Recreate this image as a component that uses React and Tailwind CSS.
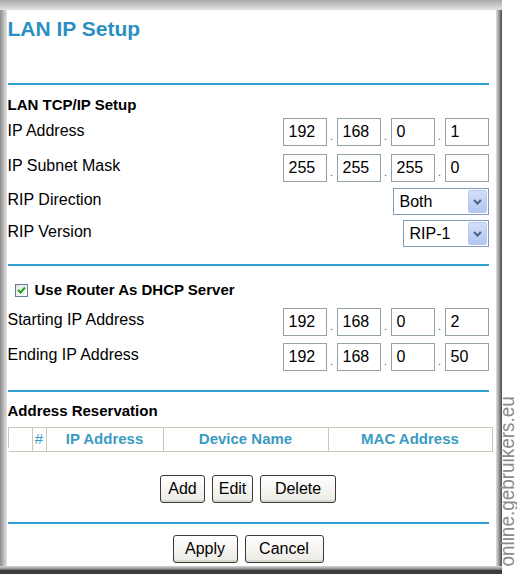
import React from 'react';

const Field = ({ value }) => (
  <div className="w-[44px] h-[28px] border border-[#93a2a8] bg-white flex items-center pl-[5px] text-[16px] leading-none">
    {value}
  </div>
);

const IpGroup = ({ values }) => (
  <div className="flex items-end">
    {values.map((v, i) => (
      <React.Fragment key={i}>
        {i > 0 && <span className="w-[10px] text-center text-[11px] leading-none pb-[4px] text-[#555]">.</span>}
        <Field value={v} />
      </React.Fragment>
    ))}
  </div>
);

const Chevron = () => (
  <svg width="9" height="6" viewBox="0 0 9 6">
    <polyline points="1,1 4.5,4.5 8,1" fill="none" stroke="#4d6185" strokeWidth="2" />
  </svg>
);

const Select = ({ value, w }) => (
  <div className={`${w} h-[27px] border border-[#7f9db9] bg-white flex items-center pl-[6px] p-px`}>
    <span className="flex-1 text-[16px] leading-none">{value}</span>
    <div className="w-[19px] h-full rounded-[2px] border border-[#b7c8ef] bg-gradient-to-b from-[#d3defb] to-[#b3c6f3] flex items-center justify-center">
      <Chevron />
    </div>
  </div>
);

const Btn = ({ children, w }) => (
  <div className={`${w} h-[28px] border border-[#3a3a3a] rounded-[3px] bg-gradient-to-b from-white to-[#eceae3] shadow-[inset_0_-2px_0_#d9d6cc] flex items-center justify-center text-[16px] leading-none`}>
    {children}
  </div>
);

const Line = ({ mt }) => <div className={`${mt} h-[2px] bg-[#2f9fd4]`} />;

const Row = ({ label, h, children }) => (
  <div className={`${h} flex items-center justify-between`}>
    <span className="text-[16px] leading-none pb-[3px]">{label}</span>
    {children}
  </div>
);

export default function App() {
  return (
    <div className="relative w-[517px] h-[582px] bg-white overflow-hidden flex font-['Liberation_Sans',Arial,sans-serif] text-black">
      <div className="w-[502px] h-[574px] flex flex-col">
        <div className="h-[10px] bg-gradient-to-b from-[#a9a9a9] to-[#e4e4e4]" />
        <div className="flex-1 flex">
          <div className="w-[7px] bg-gradient-to-r from-[#8c8c8c] to-[#e6e6e6]" />
          <div className="flex-1 flex flex-col pl-px pr-[7px]">
            <div className="mt-[7px] h-[24px] text-[21px] leading-[24px] font-bold text-[#2b8fc2]">LAN IP Setup</div>
            <Line mt="mt-[42px]" />
            <div className="mt-[11px] h-[18px] text-[15px] leading-[18px] font-bold">LAN TCP/IP Setup</div>
            <Row label="IP Address" h="h-[36px]"><IpGroup values={['192', '168', '0', '1']} /></Row>
            <Row label="IP Subnet Mask" h="h-[35px]"><IpGroup values={['255', '255', '255', '0']} /></Row>
            <Row label="RIP Direction" h="h-[33px]"><Select value="Both" w="w-[96px]" /></Row>
            <Row label="RIP Version" h="h-[31px]"><Select value="RIP-1" w="w-[86px]" /></Row>
            <Line mt="mt-[15px]" />
            <div className="mt-[15px] h-[18px] flex items-center pl-[7px] gap-[7px]">
              <div className="w-[13px] h-[13px] border border-[#5d7f9c] bg-gradient-to-br from-[#e6e6e0] to-white flex items-center justify-center">
                <svg width="9" height="8" viewBox="0 0 9 8">
                  <polyline points="1,4 3.5,6.5 8,1.5" fill="none" stroke="#21a121" strokeWidth="2" />
                </svg>
              </div>
              <span className="text-[15px] leading-[18px] font-bold">Use Router As DHCP Server</span>
            </div>
            <div className="mt-[5px]" />
            <Row label="Starting IP Address" h="h-[35px]"><IpGroup values={['192', '168', '0', '2']} /></Row>
            <Row label="Ending IP Address" h="h-[35px]"><IpGroup values={['192', '168', '0', '50']} /></Row>
            <Line mt="mt-[16px]" />
            <div className="mt-[10px] h-[18px] text-[15px] leading-[18px] font-bold">Address Reservation</div>
            <div className="mt-[7px] mr-[-4px] h-[21px] grid grid-cols-[24px_14px_117px_165px_164px] border-t border-l border-[#c9c9b8] text-[15px] font-bold text-[#3a9bc2]">
              <div className="border-r border-b border-[#c9c9b8] bg-white" />
              <div className="border-r border-b border-[#c9c9b8] bg-white flex items-center justify-center font-normal">#</div>
              <div className="border-r border-b border-[#c9c9b8] bg-white flex items-center justify-center">IP Address</div>
              <div className="border-r border-b border-[#c9c9b8] bg-white flex items-center justify-center">Device Name</div>
              <div className="border-r border-b border-[#c9c9b8] bg-white flex items-center justify-center">MAC Address</div>
            </div>
            <div className="mt-[27px] flex justify-center gap-[7px]">
              <Btn w="w-[45px]">Add</Btn>
              <Btn w="w-[41px]">Edit</Btn>
              <Btn w="w-[76px]">Delete</Btn>
            </div>
            <Line mt="mt-[19px]" />
            <div className="mt-[11px] flex justify-center gap-[7px]">
              <Btn w="w-[65px]">Apply</Btn>
              <Btn w="w-[79px]">Cancel</Btn>
            </div>
          </div>
          <div className="w-[7px] bg-gradient-to-r from-[#e2e2e2] via-[#9a9a9a] to-[#4a4a4a]" />
        </div>
        <div className="h-[8px] bg-[linear-gradient(to_bottom,#d8d8d8_0%,#8a8a8a_40%,#3c3c3c_55%,#3c3c3c_100%)]" />
      </div>
      <div className="flex-1 bg-white" />
      <div className="absolute left-[496px] top-[383px] h-[197px] flex items-center justify-center [writing-mode:vertical-rl] rotate-180 scale-y-[0.9] text-[21px] leading-[21px] whitespace-nowrap text-[#8c8c8c]">
        online.gebruikers.eu
      </div>
    </div>
  );
}
